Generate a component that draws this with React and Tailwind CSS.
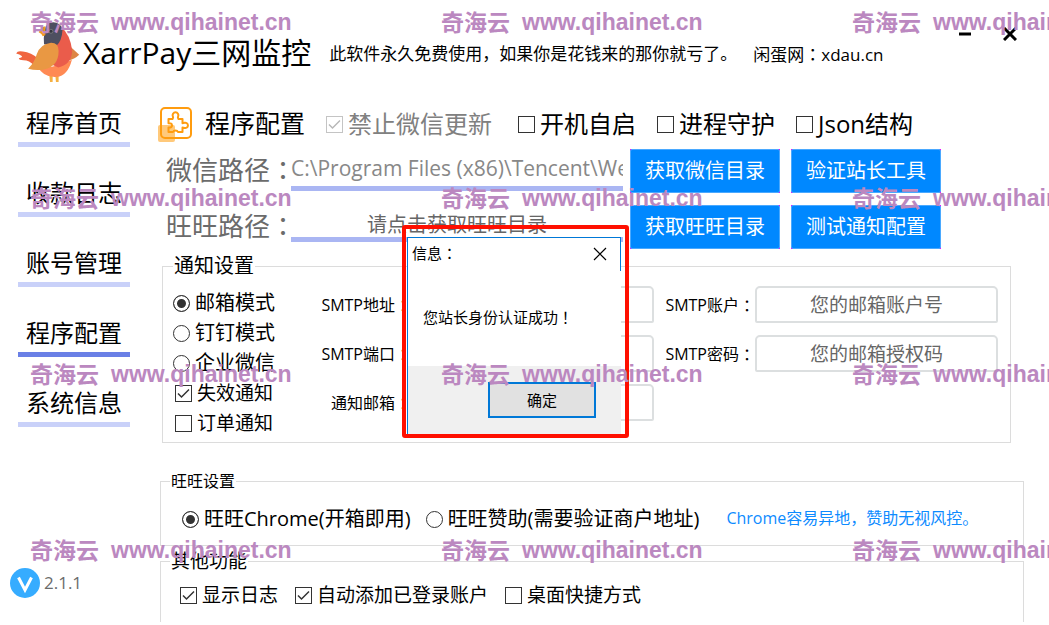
import { useState } from 'react'
import clsx from 'clsx'

const NAV = ['程序首页', '收款日志', '账号管理', '程序配置', '系统信息']

const NOTIFY_MODES = ['邮箱模式', '钉钉模式', '企业微信']

// Full-width punctuation sits in the middle of its cell
function Mark({ children }) {
  return <span className="font-['Noto_Sans_CJK_TC',sans-serif]">{children}</span>
}

function BirdLogo() {
  return (
    <svg viewBox="45 60 195 190" className="h-[63px] w-[65px] shrink-0" aria-hidden="true">
      <path d="M148 222h10v22h-8zM166 222h10v22h-8z" fill="#f5b041" />
      <path d="M48 158q4-10 20-6 26 2 46 22l-12 20q-14-16-32-16-14 0-14-6 10-2 10-6-8-6-18-8z" fill="#f0653f" />
      <path d="M210 136q14 12 28 26-14 14-34 18z" fill="#dd8544" />
      <path d="M112 196q18 36 58 33 34-4 46-52-40 18-64 22z" fill="#ff8a54" />
      <path d="M150 130l34-52q28 24 33 72-2 42-42 50l-45-20z" fill="#ea5c4b" />
      <path d="M134 90q2-26 26-26 20 0 28 20-2 38-20 52l-36-6q-2-20 2-40z" fill="#4d4f60" />
      <path d="M116 94q8-16 20-18v26q-6 4-8 4-2-8-12-12z" fill="#f39a1f" />
      <circle cx="153" cy="91" r="6" fill="#33343f" stroke="#8b8b8b" strokeWidth="2" />
      <path d="M150 126q26-2 26 24 0 48-44 56-24 4-48-2 20-20 26-44 10-30 40-34z" fill="#e99843" />
    </svg>
  )
}

function PuzzleIcon() {
  return (
    <svg viewBox="0 0 35 36" className="h-9 w-[35px] shrink-0" aria-hidden="true">
      <rect x="3" y="2" width="30" height="30" rx="4" fill="#fff" stroke="#ff9c0f" strokeWidth="2" />
      <rect x="0" y="19" width="17" height="17" rx="2" fill="#ff9c0f" opacity=".55" />
      <path
        d="M10.500 13h4q1-1.200.4-2.500a2.900 2.900 0 1 1 5.200 0q-.6 1.300.4 2.500h4v4.200q1 0 2-.4a2.700 2.700 0 1 1 0 5.200q-1-.4-2-.4v4.400h-4.500q-.6-1.600-2.500-1.600t-2.500 1.600h-4.500v-4.400q3.500.2 3.500-2.200t-3.500-2.200z"
        fill="none"
        stroke="#ff9c0f"
        strokeWidth="2"
        strokeLinejoin="round"
      />
    </svg>
  )
}

function Check({ label, className, disabled, defaultChecked }) {
  return (
    <label className={clsx('flex items-center gap-[5px] whitespace-nowrap', disabled && 'text-[#808080]', className)}>
      <span className="grid size-[17px] shrink-0">
        <input
          type="checkbox"
          disabled={disabled}
          defaultChecked={defaultChecked}
          className="peer size-[17px] appearance-none border border-[#333] bg-white [grid-area:1/1] disabled:border-[#c4c4c4]"
        />
        <svg
          viewBox="0 0 17 17"
          className="pointer-events-none invisible size-[17px] text-[#333] [grid-area:1/1] peer-checked:visible peer-disabled:text-[#b8b8b8]"
          aria-hidden="true"
        >
          <path d="M3 8.500l3.500 3.500L14 4.500" fill="none" stroke="currentColor" strokeWidth="1.500" />
        </svg>
      </span>
      {label}
    </label>
  )
}

function Radio({ name, label, defaultChecked }) {
  return (
    <label className="flex h-[30px] items-center gap-[5px] whitespace-nowrap text-[20px]">
      <input
        type="radio"
        name={name}
        defaultChecked={defaultChecked}
        className="size-[17px] shrink-0 appearance-none rounded-full border border-[#333] bg-white checked:bg-[#333] checked:shadow-[inset_0_0_0_3px_#fff]"
      />
      {label}
    </label>
  )
}

function BlueButton({ children }) {
  return (
    <span className="flex h-11 w-[150px] shrink-0 bg-[#ff00ff]">
      <button
        type="button"
        className="w-full rounded-[2px] border border-[#4aa9ff] bg-[#0088ff] text-[20px] text-white"
      >
        {children}
      </button>
    </span>
  )
}

function Field({ id, label, placeholder }) {
  return (
    <div className="flex h-[37px] flex-1 items-center">
      <label htmlFor={id} className="flex w-[90px] shrink-0 justify-end whitespace-nowrap text-[16px]">
        {label}
        <Mark>：</Mark>
      </label>
      <input
        id={id}
        placeholder={placeholder}
        className="h-full w-full min-w-0 rounded-[2px] rounded-t-[5px] border-2 border-[#dcdfe0] text-center text-[19px] placeholder:text-[#666]"
      />
    </div>
  )
}

function InfoDialog() {
  return (
    <div className="absolute top-[225px] left-[402px] h-[213px] w-[227px] rounded-[3px] border-4 border-[#ff0f00] pt-2 pr-1 pl-px">
      <div role="dialog" aria-label="信息" className="flex h-full flex-col border-l border-[#0078d7] bg-white">
        <div className="flex h-[34px] items-center justify-between border-t border-r border-[#0078d7] pr-[13px] pb-0.5 pl-1">
          <h2 className="text-[15px]">
            信息<Mark>：</Mark>
          </h2>
          <button type="button" aria-label="关闭">
            <svg viewBox="0 0 14 14" className="size-[14px]" aria-hidden="true">
              <path d="M1 1l12 12M13 1L1 13" stroke="#000" strokeWidth="1.200" />
            </svg>
          </button>
        </div>
        <p className="flex flex-1 items-center pb-0.5 pl-[15px] text-[15px]">
          您站长身份认证成功<Mark>！</Mark>
        </p>
        <div className="flex h-[68px] items-center justify-end bg-[#f0f0f0] pr-[25px]">
          <button type="button" className="h-9 w-[108px] border-2 border-[#0078d7] bg-[#e1e1e1] text-[15px]">
            确定
          </button>
        </div>
      </div>
    </div>
  )
}

function Watermark() {
  return (
    <div
      aria-hidden="true"
      className="pointer-events-none absolute inset-0 overflow-hidden pt-[6px] pl-[30px] text-[23px] font-bold text-[#bb88c0]"
    >
      {[0, 1, 2, 3].map((row) => (
        <div key={row} className="flex h-44">
          {[0, 1, 2].map((col) => (
            <span key={col} className="flex w-[411px] shrink-0 gap-3 leading-8 whitespace-nowrap">
              <span>奇海云</span>
              <span className="font-['Liberation_Sans',sans-serif]">www.qihainet.cn</span>
            </span>
          ))}
        </div>
      ))}
    </div>
  )
}

export default function App() {
  const [page, setPage] = useState('程序配置')

  return (
    <div className="relative flex min-h-screen flex-col overflow-hidden bg-white pb-[3px] font-['Open_Sans','Noto_Sans_CJK_SC',sans-serif] text-black">
      <header className="flex h-[104px] items-center pr-8 pl-[15px]">
        <BirdLogo />
        <h1 className="ml-[3px] text-[30px] whitespace-nowrap">XarrPay三网监控</h1>
        <p className="ml-[18px] flex gap-4 pt-1 text-[17px] whitespace-nowrap">
          <span>此软件永久免费使用，如果你是花钱来的那你就亏了。</span>
          <span>
            闲蛋网<Mark>：</Mark>xdau.cn
          </span>
        </p>
        <div className="mb-9 ml-auto flex items-center gap-8">
          <button type="button" aria-label="最小化">
            <svg viewBox="0 0 12 14" className="h-[14px] w-3" aria-hidden="true">
              <path d="M0 7h12" stroke="#000" strokeWidth="3" />
            </svg>
          </button>
          <button type="button" aria-label="关闭窗口">
            <svg viewBox="0 0 14 14" className="size-[14px]" aria-hidden="true">
              <path d="M1 1l12 12M13 1L1 13" stroke="#000" strokeWidth="3" />
            </svg>
          </button>
        </div>
      </header>

      <div className="flex flex-1">
        <aside className="flex w-[158px] shrink-0 flex-col pl-[10px]">
          <nav className="ml-2 flex w-[112px] flex-col gap-[27px]">
            {NAV.map((item) => (
              <button
                key={item}
                type="button"
                onClick={() => setPage(item)}
                className={clsx(
                  'h-[43px] border-b-[5px] text-[24px]',
                  page === item ? 'border-[#6a80e6]' : 'border-[#c9d1f9]',
                )}
              >
                {item}
              </button>
            ))}
          </nav>
          <div className="mt-auto mb-6 flex items-center gap-1">
            <svg viewBox="0 0 30 30" className="size-[30px]" aria-hidden="true">
              <circle cx="15" cy="15" r="15" fill="#36acff" />
              <path d="M8.500 9.500L15 22l6.500-12.500" fill="none" stroke="#fff" strokeWidth="3" />
            </svg>
            <span className="text-[17px] text-[#6b6b6b]">2.1.1</span>
          </div>
        </aside>

        <main className="flex min-w-0 flex-1 flex-col">
          <div className="flex h-10 items-center gap-[21px] text-[24px]">
            <div className="flex items-center gap-3">
              <PuzzleIcon />
              <h2 className="text-[25px] whitespace-nowrap">程序配置</h2>
            </div>
            <Check label="禁止微信更新" className="mr-[5px]" disabled defaultChecked />
            <Check label="开机自启" />
            <Check label="进程守护" />
            <Check label="Json结构" />
          </div>

          <div className="mt-[5px] mr-[108px] flex flex-col gap-3 pl-2">
            <div className="flex">
              <label htmlFor="wx-path" className="w-[125px] shrink-0 text-[26px] whitespace-nowrap text-[#6b6b6b]">
                微信路径<Mark>：</Mark>
              </label>
              <input
                id="wx-path"
                readOnly
                value="C:\Program Files (x86)\Tencent\WeChat"
                className="mr-[7px] h-[42px] w-full min-w-0 border-b-[5px] border-[#aab6f3] text-[21px] text-[#888]"
              />
              <BlueButton>获取微信目录</BlueButton>
              <span className="w-[11px] shrink-0" />
              <BlueButton>验证站长工具</BlueButton>
            </div>
            <div className="flex">
              <label htmlFor="ww-path" className="w-[125px] shrink-0 text-[26px] whitespace-nowrap text-[#6b6b6b]">
                旺旺路径<Mark>：</Mark>
              </label>
              <input
                id="ww-path"
                placeholder="请点击获取旺旺目录"
                className="mr-[7px] h-[37px] w-full min-w-0 border-b-[5px] border-[#aab6f3] pt-[6px] text-center text-[20px] placeholder:text-[#666]"
              />
              <BlueButton>获取旺旺目录</BlueButton>
              <span className="w-[11px] shrink-0" />
              <BlueButton>测试通知配置</BlueButton>
            </div>
          </div>

          <fieldset className="mt-[5px] mr-[38px] ml-1 h-[189px] border border-[#dcdcdc] pr-3 pl-[10px]">
            <legend className="px-px text-[20px] leading-6">通知设置</legend>
            <div className="flex pt-2">
              <div className="w-[148px] shrink-0 pt-0.5">
                {NOTIFY_MODES.map((mode, i) => (
                  <Radio key={mode} name="notify-mode" label={mode} defaultChecked={i === 0} />
                ))}
                <Check label="失效通知" className="h-[30px] pl-0.5 text-[19px]" defaultChecked />
                <Check label="订单通知" className="h-[30px] pl-0.5 text-[19px]" />
              </div>
              <div className="grid flex-1 grid-cols-2 content-start gap-x-[11px] gap-y-3">
                <Field id="smtp-host" label="SMTP地址" />
                <Field id="smtp-user" label="SMTP账户" placeholder="您的邮箱账户号" />
                <Field id="smtp-port" label="SMTP端口" />
                <Field id="smtp-pass" label="SMTP密码" placeholder="您的邮箱授权码" />
                <Field id="mail-to" label="通知邮箱" />
              </div>
            </div>
          </fieldset>

          <fieldset className="mt-7 mr-[25px] ml-0.5 h-[75px] border border-[#dcdcdc] pl-[21px]">
            <legend className="-ml-3 px-px text-[16px] leading-5">旺旺设置</legend>
            <div className="flex items-center gap-[15px] pt-[13px]">
              <Radio name="ww-mode" label="旺旺Chrome(开箱即用)" defaultChecked />
              <Radio name="ww-mode" label="旺旺赞助(需要验证商户地址)" />
              <p className="ml-3 pb-0.5 text-[16px] whitespace-nowrap text-[#0d8bff]">
                Chrome容易异地，赞助无视风控。
              </p>
            </div>
          </fieldset>

          <fieldset className="mt-1 mr-[25px] ml-0.5 h-[72px] border border-b-0 border-[#dcdcdc] pl-[19px]">
            <legend className="-ml-[10px] px-px text-[19px] leading-[22px]">其他功能</legend>
            <div className="flex items-center gap-[17px] pt-[9px] text-[19px]">
              <Check label="显示日志" defaultChecked />
              <Check label="自动添加已登录账户" defaultChecked />
              <Check label="桌面快捷方式" />
            </div>
          </fieldset>
        </main>
      </div>

      <InfoDialog />
      <Watermark />
    </div>
  )
}
